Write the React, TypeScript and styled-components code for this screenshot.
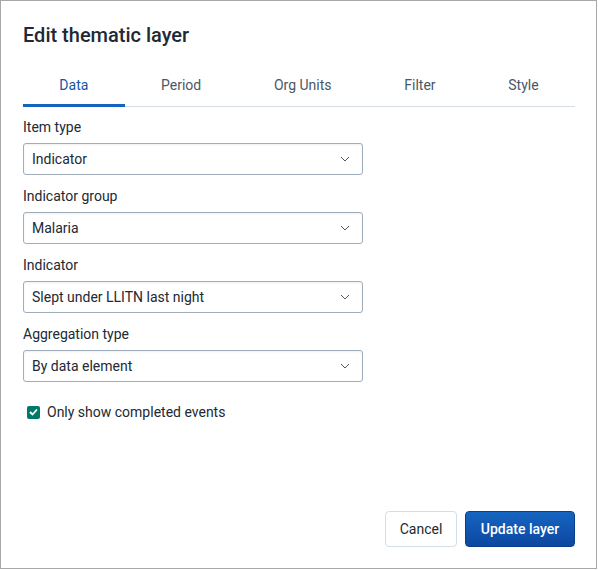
import React from "react";
import styled, { createGlobalStyle } from "styled-components";

const Global = createGlobalStyle`
  html, body { margin: 0; padding: 0; background: #fff; }
  body { font-family: Roboto, "Noto Sans", sans-serif; color: #212934; }
  * { box-sizing: border-box; }
`;

const Dialog = styled.div`
  width: 597px;
  height: 569px;
  border: 1px solid #a8a8a8;
  background: #fff;
  display: flex;
  flex-direction: column;
  padding: 0 21px 21px 22px;
`;

const Title = styled.h1`
  margin: 0;
  padding-top: 22px;
  font-size: 20px;
  line-height: 24px;
  font-weight: 500;
  color: #212934;
`;

const Tabs = styled.div`
  margin-top: 22px;
  display: flex;
  border-bottom: 1px solid #d5dde5;
  width: 552px;
`;

const Tab = styled.div<{ $active?: boolean }>`
  flex: 1 1 auto;
  text-align: center;
  font-size: 14px;
  height: 38px;
  line-height: 32px;
  color: ${(p) => (p.$active ? "#1556a8" : "#4a5768")};
  border-bottom: 3px solid ${(p) => (p.$active ? "#1565c0" : "transparent")};
  margin-bottom: -1px;
`;

const Form = styled.div`
  display: flex;
  flex-direction: column;
  padding-top: 11px;
  gap: 12px;
`;

const Field = styled.div`
  display: flex;
  flex-direction: column;
  gap: 7px;
`;

const Label = styled.label`
  font-size: 14px;
  line-height: 18px;
  color: #212934;
`;

const Select = styled.div`
  width: 340px;
  height: 32px;
  border: 1px solid #a0adba;
  border-radius: 3px;
  display: flex;
  align-items: center;
  justify-content: space-between;
  padding: 0 12px 0 8px;
  font-size: 14px;
  color: #212934;
  box-shadow: inset 0 1px 2px rgba(48, 54, 60, 0.08);
`;

const CheckRow = styled.div`
  display: flex;
  align-items: center;
  gap: 7px;
  margin-top: 10px;
  padding-left: 4px;
  font-size: 14px;
`;

const Box = styled.span`
  width: 13px;
  height: 13px;
  border-radius: 2px;
  background: #00796b;
  display: inline-flex;
  align-items: center;
  justify-content: center;
`;

const Spacer = styled.div`
  flex: 1;
`;

const Actions = styled.div`
  display: flex;
  justify-content: flex-end;
  gap: 8px;
`;

const Button = styled.button<{ $primary?: boolean }>`
  height: 36px;
  border-radius: 4px;
  font-family: Roboto, sans-serif;
  font-size: 14px;
  padding: 0 12px;
  cursor: pointer;
  ${(p) =>
    p.$primary
      ? `
    background: linear-gradient(180deg, #1565c0 0%, #0d47a1 100%);
    border: 1px solid #0b3f8c;
    color: #fff;
    font-weight: 500;
    width: 110px;
  `
      : `
    background: #fff;
    border: 1px solid #d5dde5;
    color: #212934;
    width: 72px;
  `}
`;

const Chevron = () => (
  <svg width="10" height="6" viewBox="0 0 10 6" fill="none">
    <path d="M1 1l4 4 4-4" stroke="#4a5768" strokeWidth="1" />
  </svg>
);

const fields = [
  { label: "Item type", value: "Indicator" },
  { label: "Indicator group", value: "Malaria" },
  { label: "Indicator", value: "Slept under LLITN last night" },
  { label: "Aggregation type", value: "By data element" },
];

export default function App() {
  return (
    <>
      <Global />
      <Dialog>
        <Title>Edit thematic layer</Title>
        <Tabs>
          <Tab $active>Data</Tab>
          <Tab>Period</Tab>
          <Tab>Org Units</Tab>
          <Tab>Filter</Tab>
          <Tab>Style</Tab>
        </Tabs>
        <Form>
          {fields.map((f) => (
            <Field key={f.label}>
              <Label>{f.label}</Label>
              <Select>
                <span>{f.value}</span>
                <Chevron />
              </Select>
            </Field>
          ))}
          <CheckRow>
            <Box>
              <svg width="9" height="8" viewBox="0 0 9 8">
                <path d="M1 4l2.5 2.5L8 1.5" stroke="#fff" strokeWidth="1.8" fill="none" />
              </svg>
            </Box>
            Only show completed events
          </CheckRow>
        </Form>
        <Spacer />
        <Actions>
          <Button>Cancel</Button>
          <Button $primary>Update layer</Button>
        </Actions>
      </Dialog>
    </>
  );
}
